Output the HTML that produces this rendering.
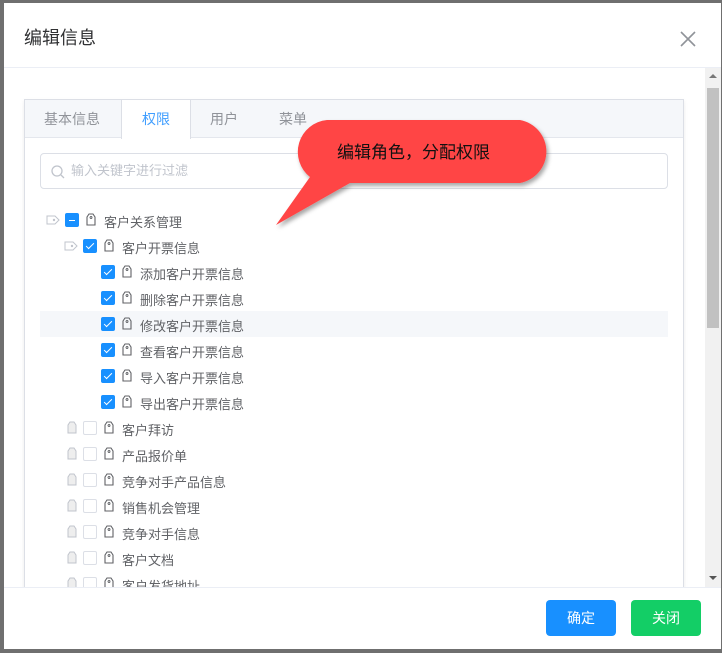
<!DOCTYPE html>
<html><head><meta charset="utf-8"><style>
*{box-sizing:border-box;margin:0;padding:0}
html,body{width:722px;height:653px;overflow:hidden}
body{background:#6f6f6f;font-family:"Liberation Sans","Noto Sans CJK SC",sans-serif;position:relative}
.dlg{position:absolute;left:4px;top:3px;width:717px;height:646px;background:#fff;overflow:hidden}
.title{position:absolute;left:20px;top:21px;font-size:18px;color:#303133}
.close{position:absolute;left:676px;top:28px}
.hd{position:absolute;left:0;top:64px;width:717px;height:1px;background:#ebeef5}
.body{position:absolute;left:0;top:65px;width:701px;height:519px;overflow:hidden}
.sb{position:absolute;left:701px;top:65px;width:16px;height:519px;background:#f1f1f1}
.thumb{position:absolute;left:2px;top:20px;width:12px;height:240px;background:#c1c1c1}
.ft{position:absolute;left:0;top:584px;width:717px;height:1px;background:#ebeef5}
.btn{position:absolute;top:597px;width:70px;height:36px;border-radius:4px;color:#fff;font-size:14px;text-align:center;line-height:36px}
.card{position:absolute;left:20px;top:31px;width:660px;height:520px;border:1px solid #dcdfe6;box-shadow:0 2px 4px rgba(0,0,0,.08)}
.tabs{height:38px;background:#f5f7fa;border-bottom:1px solid #e4e7ed;position:relative}
.tab{position:absolute;top:0;height:39px;line-height:38px;font-size:14px;color:#909399}
.tab.a{background:#fff;color:#409eff;border-left:1px solid #dcdfe6;border-right:1px solid #dcdfe6;width:70px;text-align:center;left:96px}
.inp{position:absolute;left:15px;top:53px;width:628px;height:36px;border:1px solid #dcdfe6;border-radius:4px;font-size:13px;color:#c0c4cc;line-height:34px;padding-left:30px}
.row{position:absolute;left:15px;width:628px;height:26px;font-size:13px;color:#606266}
.row span{position:absolute;top:5px}
.cb{position:absolute;top:6px;width:14px;height:14px;border:1px solid #dcdfe6;border-radius:2px;background:#fff}
.cb.on{background:#1890ff;border-color:#1890ff}
.cb.on:after{content:"";position:absolute;left:4px;top:1px;width:3px;height:7px;border:solid #fff;border-width:0 1.5px 1.5px 0;transform:rotate(45deg)}
.cb.ind{background:#1890ff;border-color:#1890ff}
.cb.ind:after{content:"";position:absolute;left:3px;top:5.5px;width:6px;height:1.5px;background:#fff}
svg.t{position:absolute;top:6px}
</style></head><body>
<div class="dlg">
<div class="title">编辑信息</div>
<svg class="close" width="16" height="16" viewBox="0 0 16 16"><path d="M1 1L15 15M15 1L1 15" stroke="#909399" stroke-width="1.6"/></svg>
<div class="hd"></div>
<div class="body">
<div class="card">
<div class="tabs">
<div class="tab" style="left:19px">基本信息</div>
<div class="tab a">权限</div>
<div class="tab" style="left:185px">用户</div>
<div class="tab" style="left:254px">菜单</div>
</div>
<div class="inp"><svg style="position:absolute;left:10px;top:11px" width="14" height="14" viewBox="0 0 14 14"><circle cx="6" cy="6" r="5" fill="none" stroke="#c0c4cc" stroke-width="1.3"/><path d="M10 10L13 13" stroke="#c0c4cc" stroke-width="1.3"/></svg>输入关键字进行过滤</div>
<div id="tree"></div>
</div>
</div>
<div class="sb"><div style="position:absolute;left:4px;top:6px;border:4px solid transparent;border-bottom:4px solid #777;border-top:0"></div><div class="thumb"></div><div style="position:absolute;left:4px;top:508px;border:4px solid transparent;border-top:4px solid #555;border-bottom:0"></div></div>
<div class="ft"></div>
<div class="btn" style="left:542px;background:#1890ff">确定</div>
<div class="btn" style="left:627px;background:#13ce66">关闭</div>
</div>
<svg style="position:absolute;left:270px;top:115px" width="290" height="120" viewBox="0 0 290 120"><defs><filter id="f"><feDropShadow dx="2" dy="3" stdDeviation="2" flood-opacity=".35"/></filter></defs><path d="M57 5 H250 A32 32 0 0 1 250 68 H80 L6 110 L40 62 A32 32 0 0 1 57 5Z" fill="#ff4444" filter="url(#f)"/><text x="67" y="43" font-size="17" fill="#111" font-family="Liberation Sans,Noto Sans CJK SC,sans-serif">编辑角色，分配权限</text></svg>
<script>
var tag='<path d="M3 1h4l2 3v8H1V4z" fill="none" stroke="#606266" stroke-width="1.1"/><circle cx="5" cy="4.5" r="1" fill="none" stroke="#606266" stroke-width=".9"/>';
var rows=[[1,'ind','客户关系管理',1],[2,'on','客户开票信息',1],[3,'on','添加客户开票信息'],[3,'on','删除客户开票信息'],[3,'on','修改客户开票信息'],[3,'on','查看客户开票信息'],[3,'on','导入客户开票信息'],[3,'on','导出客户开票信息'],[2,'','客户拜访',2],[2,'','产品报价单',2],[2,'','竞争对手产品信息',2],[2,'','销售机会管理',2],[2,'','竞争对手信息',2],[2,'','客户文档',2],[2,'','客户发货地址',2]];
var h='';rows.forEach(function(r,i){var top=107+i*26;var off=(r[0]-1)*18;var bg=i==4?'background:#f5f7fa;':'';
h+='<div class="row" style="top:'+top+'px;'+bg+'">';
if(r[3]==1)h+='<svg class="t" style="left:'+(6+off)+'px;top:8px" width="14" height="10" viewBox="0 0 14 10"><path d="M1 1h8l4 4-4 4H1z" fill="none" stroke="#c0c4cc"/><circle cx="8" cy="5" r="1.2" fill="#c0c4cc"/></svg>';
if(r[3]==2)h+='<svg class="t" style="left:'+(9+off)+'px" width="10" height="13" viewBox="0 0 10 13"><path d="M3 1h4l2 3v8H1V4z" fill="#eee" stroke="#c0c4cc"/></svg>';
h+='<div class="cb '+r[1]+'" style="left:'+(25+off)+'px"></div>';
h+='<svg class="t" style="left:'+(46+off)+'px" width="10" height="13" viewBox="0 0 10 13">'+tag+'</svg>';
h+='<span style="left:'+(64+off)+'px">'+r[2]+'</span></div>';});
document.getElementById('tree').innerHTML=h;
</script>
</body></html>
